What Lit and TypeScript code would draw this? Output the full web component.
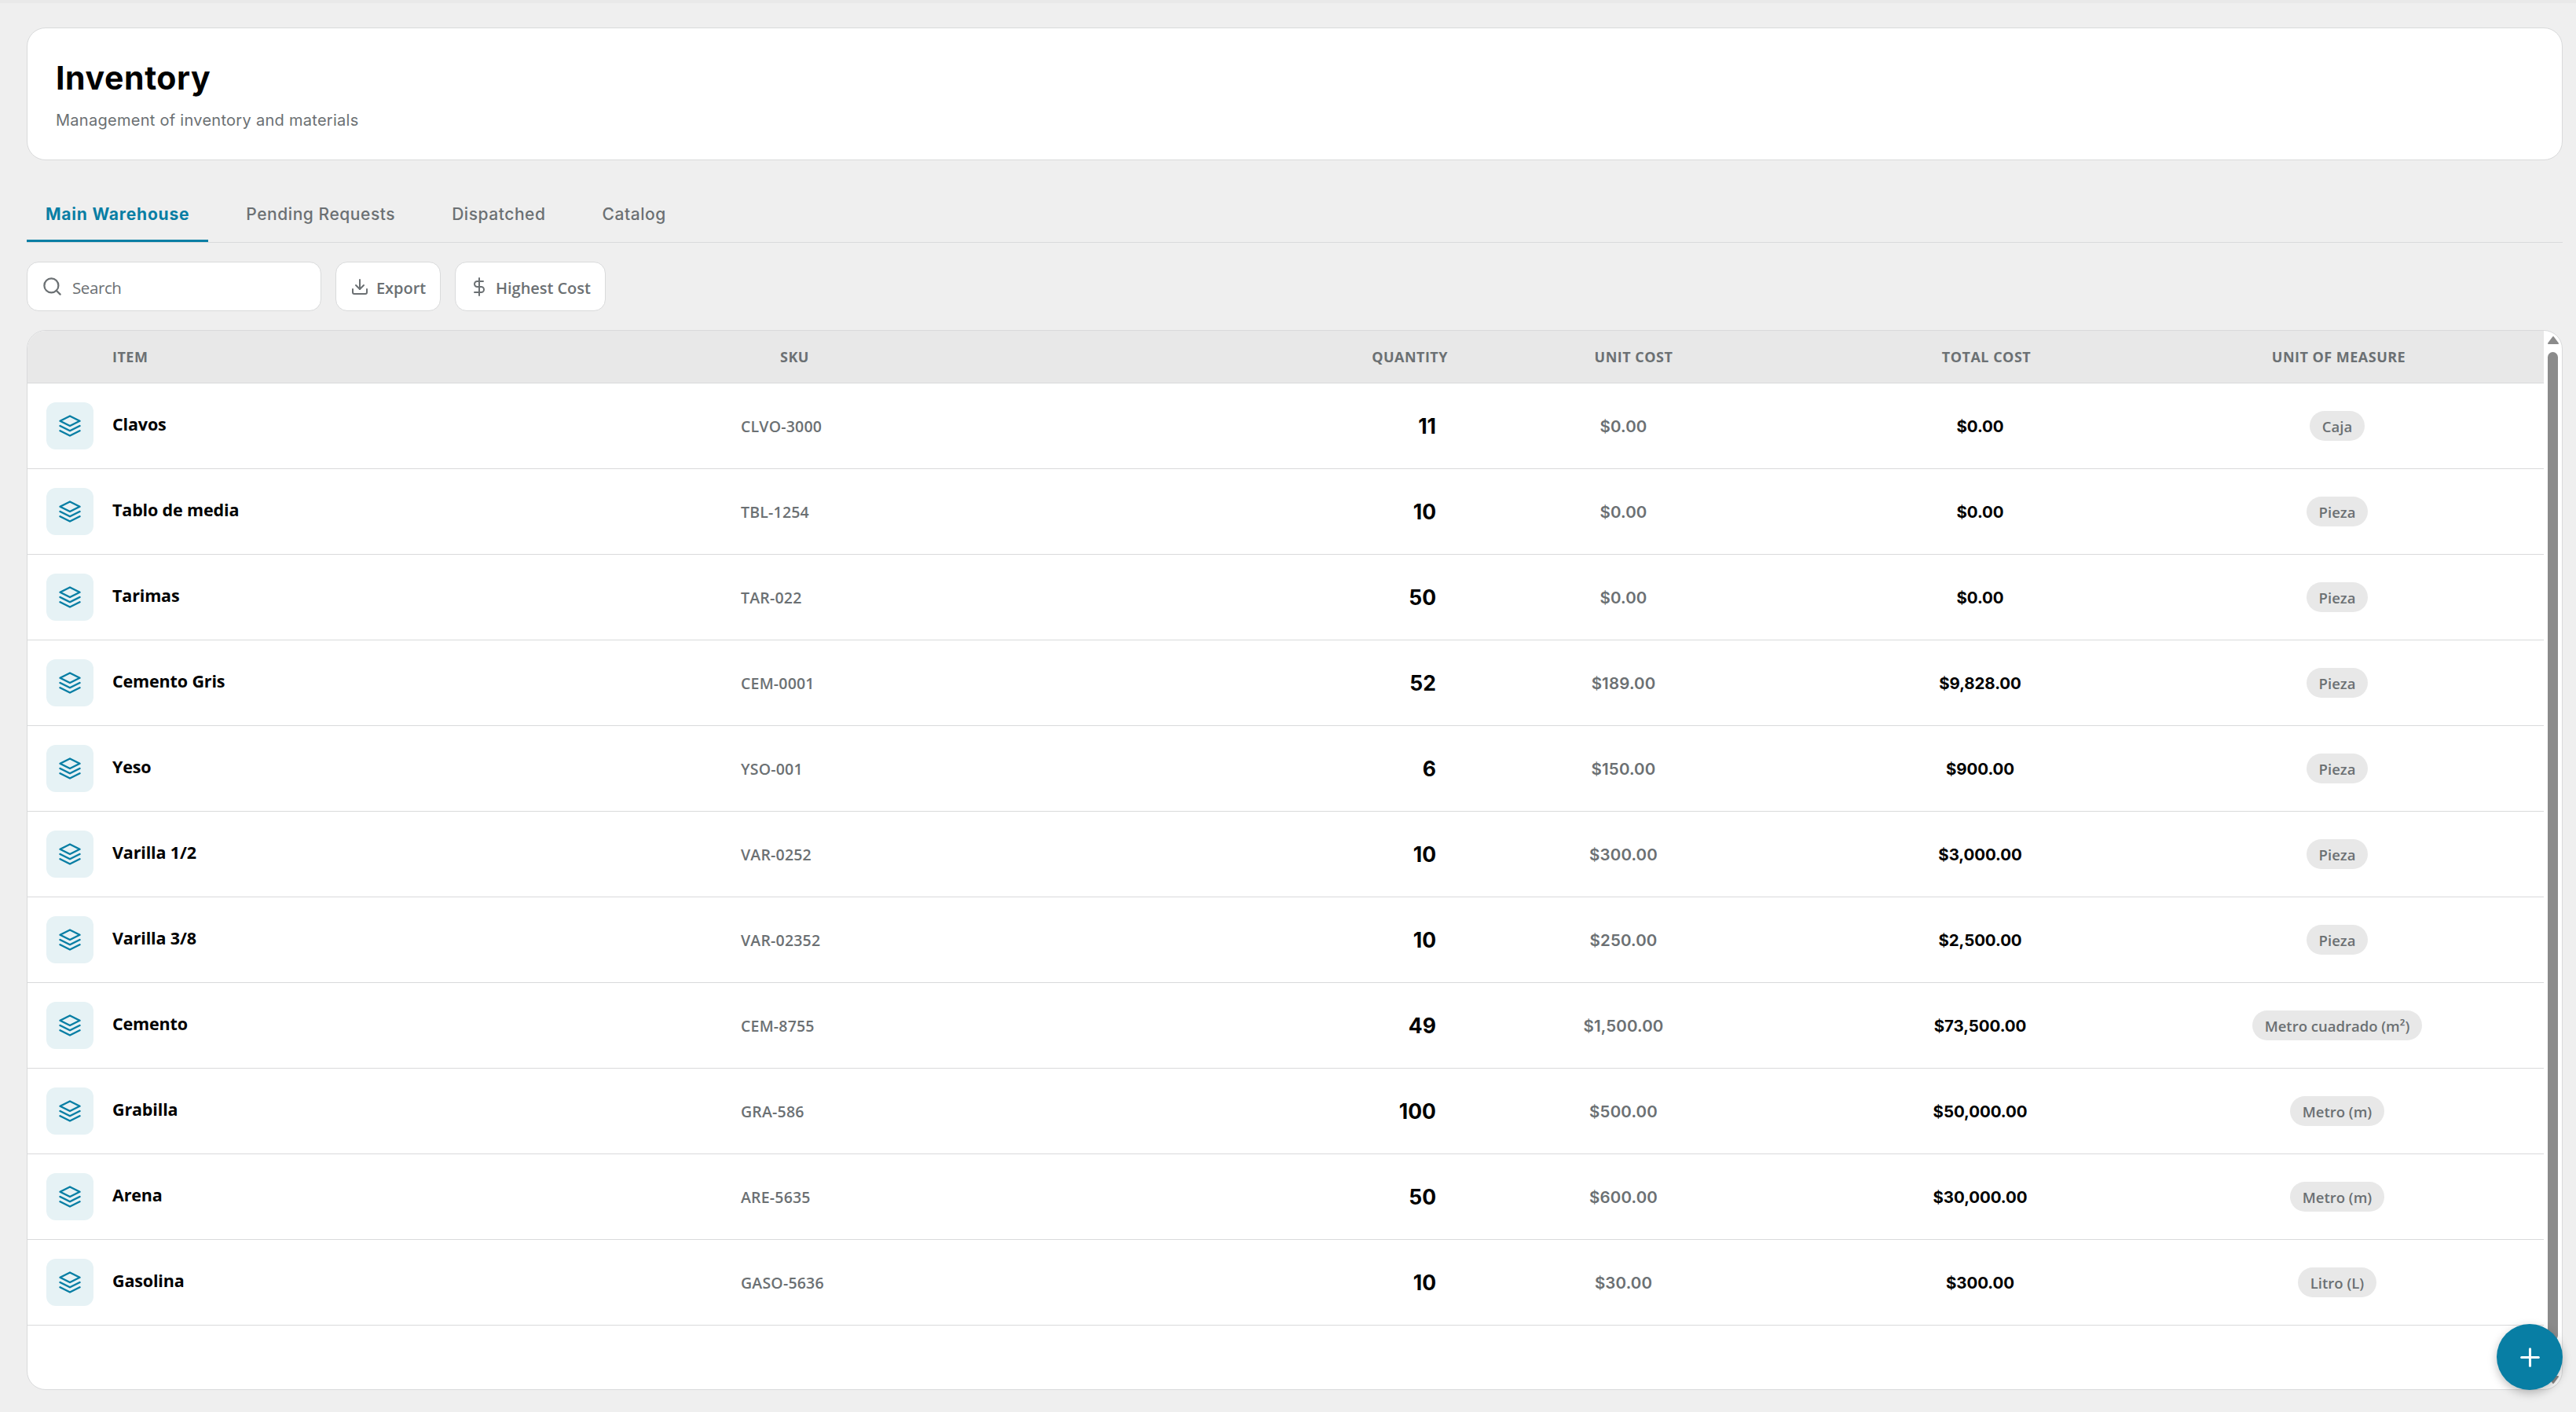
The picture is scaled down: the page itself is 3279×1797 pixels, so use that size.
import { LitElement, html, css, svg, type TemplateResult } from 'lit'
import { customElement, property, state } from 'lit/decorators.js'
import { classMap } from 'lit/directives/class-map.js'

interface InventoryItem {
  name: string
  sku: string
  quantity: number
  unitCost: number
  unit: string
}

const TABS = ['Main Warehouse', 'Pending Requests', 'Dispatched', 'Catalog']

const ITEMS: InventoryItem[] = [
  { name: 'Clavos', sku: 'CLVO-3000', quantity: 11, unitCost: 0, unit: 'Caja' },
  { name: 'Tablo de media', sku: 'TBL-1254', quantity: 10, unitCost: 0, unit: 'Pieza' },
  { name: 'Tarimas', sku: 'TAR-022', quantity: 50, unitCost: 0, unit: 'Pieza' },
  { name: 'Cemento Gris', sku: 'CEM-0001', quantity: 52, unitCost: 189, unit: 'Pieza' },
  { name: 'Yeso', sku: 'YSO-001', quantity: 6, unitCost: 150, unit: 'Pieza' },
  { name: 'Varilla 1/2', sku: 'VAR-0252', quantity: 10, unitCost: 300, unit: 'Pieza' },
  { name: 'Varilla 3/8', sku: 'VAR-02352', quantity: 10, unitCost: 250, unit: 'Pieza' },
  { name: 'Cemento', sku: 'CEM-8755', quantity: 49, unitCost: 1500, unit: 'Metro cuadrado (m²)' },
  { name: 'Grabilla', sku: 'GRA-586', quantity: 100, unitCost: 500, unit: 'Metro (m)' },
  { name: 'Arena', sku: 'ARE-5635', quantity: 50, unitCost: 600, unit: 'Metro (m)' },
  { name: 'Gasolina', sku: 'GASO-5636', quantity: 10, unitCost: 30, unit: 'Litro (L)' }
]

const ICONS: Record<string, TemplateResult> = {
  search: svg`<circle cx="11" cy="11" r="8"/><path d="m21 21-4.35-4.35"/>`,
  download: svg`<path d="M21 15v4a2 2 0 0 1-2 2H5a2 2 0 0 1-2-2v-4"/><path d="m7 10 5 5 5-5"/><path d="M12 15V3"/>`,
  dollar: svg`<path d="M12 1v22"/><path d="M17 5H9.5a3.5 3.5 0 0 0 0 7h5a3.5 3.5 0 0 1 0 7H6"/>`,
  layers: svg`<path d="M12 2 2 7l10 5 10-5-10-5z"/><path d="m2 17 10 5 10-5"/><path d="m2 12 10 5 10-5"/>`,
  plus: svg`<path d="M12 5v14"/><path d="M5 12h14"/>`
}

const money = (value: number): string =>
  '$' + value.toLocaleString('en-US', { minimumFractionDigits: 2, maximumFractionDigits: 2 })

@customElement('app-icon')
export class AppIcon extends LitElement {
  static styles = css`
    :host {
      display: block;
      flex: none;
      width: 24px;
      height: 24px;
    }

    svg {
      display: block;
      width: 100%;
      height: 100%;
      fill: none;
      stroke: currentColor;
      stroke-width: 2;
      stroke-linecap: round;
      stroke-linejoin: round;
    }
  `

  @property({ type: String }) name = 'search'

  render (): TemplateResult {
    return html`<svg viewBox="0 0 24 24">${ICONS[this.name]}</svg>`
  }
}

@customElement('app-root')
export class AppRoot extends LitElement {
  static styles = css`
    :host {
      --accent: #087ea4;
      --muted: #6b7073;
      --line: #d9dadb;
      --surface: #e8e8e8;
      --display-font: Inter, 'Liberation Sans', sans-serif;
      --text-font: 'Open Sans', 'Noto Sans', sans-serif;
      display: block;
      box-sizing: border-box;
      height: 100vh;
      background: #efefef;
      color: #000;
      font-family: var(--text-font);
      overflow: hidden;
    }

    *, *::before {
      box-sizing: border-box;
    }

    .page {
      display: flex;
      flex-direction: column;
      height: 100%;
      padding: 31px 17px 28px 34px;
      border-top: 4px solid #e9e9e9;
    }

    .header {
      height: 169px;
      padding: 37px 36px;
      background: #fff;
      border: 1px solid var(--line);
      border-radius: 24px;
      font-family: var(--display-font);
    }

    .title {
      margin: 0;
      font-size: 41px;
      font-weight: 700;
      line-height: 52px;
      letter-spacing: 0.6px;
    }

    .subtitle {
      margin: 13px 0 0;
      color: var(--muted);
      font-size: 20px;
      line-height: 30px;
      letter-spacing: 0.28px;
    }

    .tabs {
      display: flex;
      gap: 24px;
      height: 69px;
      margin-top: 36px;
      border-bottom: 1px solid var(--line);
    }

    .tab {
      padding: 0 24px;
      border: 0;
      border-bottom: 3px solid transparent;
      background: none;
      color: var(--muted);
      font: 500 21px var(--display-font);
      letter-spacing: 0.55px;
    }

    .tab.active {
      border-bottom-color: var(--accent);
      color: var(--accent);
      font-weight: 700;
      letter-spacing: 0.8px;
    }

    .toolbar {
      display: flex;
      gap: 18px;
      height: 63px;
      margin-top: 24px;
      color: var(--muted);
      font-size: 20px;
    }

    .control {
      display: flex;
      align-items: center;
      gap: 9px;
      padding: 0 18px;
      background: #fff;
      border: 1px solid var(--line);
      border-radius: 15px;
      color: inherit;
      font: 600 20px var(--text-font);
      letter-spacing: -0.05px;
    }

    .control span {
      padding-top: 3px;
    }

    .search {
      gap: 12px;
      width: 375px;
      font-size: 20.5px;
      font-weight: 400;
      letter-spacing: -0.4px;
    }

    .search app-icon {
      width: 27px;
      height: 27px;
    }

    .table {
      display: flex;
      flex: 1;
      min-height: 0;
      margin-top: 24px;
      background: #fff;
      border: 1px solid var(--line);
      border-radius: 24px;
      overflow: hidden;
    }

    .rows {
      flex: 1;
    }

    .row {
      display: grid;
      grid-template-columns: 108px 800px 357px 550px 433px 475px 434px;
      align-items: center;
      height: 109px;
      border-bottom: 1px solid var(--line);
    }

    .head {
      height: 67px;
      background: var(--surface);
      color: var(--muted);
      font-size: 18px;
      font-weight: 700;
      letter-spacing: 0.48px;
      text-transform: uppercase;
    }

    .tile {
      display: flex;
      align-items: center;
      justify-content: center;
      width: 60px;
      height: 60px;
      margin-left: 24px;
      border-radius: 12px;
      background: #e6f2f5;
      color: var(--accent);
    }

    .tile app-icon {
      width: 30px;
      height: 30px;
    }

    .name {
      padding-bottom: 5px;
      font-size: 21.5px;
      font-weight: 700;
      letter-spacing: -0.15px;
    }

    .sku {
      color: var(--muted);
      font-size: 19.5px;
      font-weight: 650;
      letter-spacing: 0.2px;
    }

    .quantity {
      padding-right: 22px;
      font: 650 26.5px var(--display-font);
      text-align: right;
    }

    .cost {
      color: var(--muted);
      font: 600 20.5px var(--display-font);
      letter-spacing: 0.15px;
      text-align: center;
    }

    .total {
      color: #000;
      font-weight: 700;
      letter-spacing: -0.1px;
    }

    .unit {
      text-align: center;
    }

    .pill {
      display: inline-block;
      height: 38px;
      padding: 0 16px;
      border-radius: 19px;
      background: var(--surface);
      color: var(--muted);
      font-size: 18.5px;
      font-weight: 600;
      line-height: 39px;
      vertical-align: middle;
    }

    .head-sku {
      padding-left: 50px;
    }

    .head-quantity {
      padding-right: 7px;
      text-align: right;
    }

    .head-unit-cost,
    .head-total,
    .head-measure {
      padding-left: 26px;
      text-align: center;
    }

    .head-total {
      padding-left: 16px;
    }

    .head-measure {
      padding-left: 4px;
    }

    .scrollbar {
      display: flex;
      flex-direction: column;
      align-items: center;
      width: 23px;
      padding: 6px 0;
      color: #8b8b8b;
    }

    .arrow {
      display: block;
      width: 16px;
      height: 12px;
      fill: currentColor;
      stroke: currentColor;
      stroke-width: 2;
      stroke-linejoin: round;
    }

    .thumb {
      width: 13px;
      height: 1258px;
      margin: 9px 0 auto;
      border-radius: 7px;
      background: currentColor;
    }

    .fab {
      position: fixed;
      right: 17px;
      bottom: 28px;
      display: flex;
      align-items: center;
      justify-content: center;
      width: 84px;
      height: 84px;
      padding: 0;
      border: 0;
      border-radius: 50%;
      background: var(--accent);
      box-shadow: 0 4px 12px rgba(0, 0, 0, 0.25);
      color: #fff;
    }

    .fab app-icon {
      width: 37px;
      height: 37px;
    }
  `

  @state() private activeTab = TABS[0]

  render (): TemplateResult {
    return html`
      <div class="page">
        <header class="header">
          <h1 class="title">Inventory</h1>
          <p class="subtitle">Management of inventory and materials</p>
        </header>
        <nav class="tabs">
          ${TABS.map(tab => html`
            <button
              class=${classMap({ tab: true, active: tab === this.activeTab })}
              @click=${() => { this.activeTab = tab }}
            >${tab}</button>
          `)}
        </nav>
        <div class="toolbar">
          <div class="control search"><app-icon name="search"></app-icon><span>Search</span></div>
          <button class="control"><app-icon name="download"></app-icon><span>Export</span></button>
          <button class="control"><app-icon name="dollar"></app-icon><span>Highest Cost</span></button>
        </div>
        <section class="table">
          <div class="rows">
            <div class="row head">
              <div></div>
              <div>Item</div>
              <div class="head-sku">SKU</div>
              <div class="head-quantity">Quantity</div>
              <div class="head-unit-cost">Unit cost</div>
              <div class="head-total">Total cost</div>
              <div class="head-measure">Unit of measure</div>
            </div>
            ${ITEMS.map(item => this._renderRow(item))}
          </div>
          <div class="scrollbar">
            <svg class="arrow" viewBox="0 0 16 12"><path d="M8 2 14 10H2z"/></svg>
            <div class="thumb"></div>
            <svg class="arrow" viewBox="0 0 16 12"><path d="M8 10 2 2h12z"/></svg>
          </div>
        </section>
      </div>
      <button class="fab" aria-label="Add item"><app-icon name="plus"></app-icon></button>
    `
  }

  private _renderRow (item: InventoryItem): TemplateResult {
    return html`
      <div class="row">
        <div class="tile"><app-icon name="layers"></app-icon></div>
        <div class="name">${item.name}</div>
        <div class="sku">${item.sku}</div>
        <div class="quantity">${item.quantity}</div>
        <div class="cost">${money(item.unitCost)}</div>
        <div class="cost total">${money(item.unitCost * item.quantity)}</div>
        <div class="unit"><span class="pill">${item.unit}</span></div>
      </div>
    `
  }
}
